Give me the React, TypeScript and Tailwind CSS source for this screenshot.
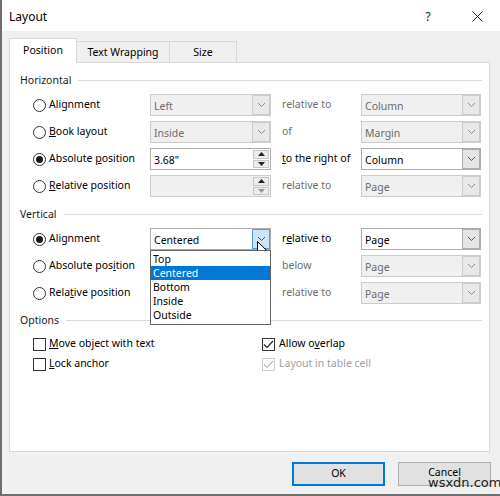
import type { ReactNode } from "react";

function Radio({ checked }: { checked?: boolean }) {
  return (
    <span className="flex size-[13px] shrink-0 items-center justify-center rounded-full border border-[#333333] bg-white">
      {checked && <span className="size-[7px] rounded-full bg-[#1a1a1a]" />}
    </span>
  );
}

function Check({ checked, disabled }: { checked?: boolean; disabled?: boolean }) {
  return (
    <span
      className={
        disabled
          ? "flex size-[13px] shrink-0 items-center justify-center border border-[#cccccc] bg-white"
          : "flex size-[13px] shrink-0 items-center justify-center border border-[#333333] bg-white"
      }
    >
      {checked && (
        <svg width="11" height="9" viewBox="0 0 11 9">
          <path d="M1 4.5 L4 7.5 L10 1" fill="none" stroke={disabled ? "#bcbcbc" : "#222"} strokeWidth="1.2" />
        </svg>
      )}
    </span>
  );
}

function Chevron({ color = "#606060" }: { color?: string }) {
  return (
    <svg width="9" height="6" viewBox="0 0 9 6">
      <path d="M1 1 L4.5 4.5 L8 1" fill="none" stroke={color} strokeWidth="1" />
    </svg>
  );
}

function Combo({
  value,
  disabled,
  hot,
  wide,
  children,
}: {
  value: string;
  disabled?: boolean;
  hot?: boolean;
  wide?: boolean;
  children?: ReactNode;
}) {
  const box = disabled
    ? "border-[#cccccc] bg-[#f0f0f0] text-[#6d6d6d]"
    : "border-[#adadad] bg-white text-black";
  const btn = hot
    ? "border-[#569de5] bg-[#cce4f7]"
    : disabled
      ? "border-[#cccccc] bg-[#e8e8e8]"
      : "border-[#adadad] bg-[#e5e5e5]";
  return (
    <div className={`relative flex h-[22px] shrink-0 border ${wide ? "w-[121px]" : "w-[120px]"} ${box}`}>
      <span className="flex-1 pl-[3px] pt-px leading-[20px]">{value}</span>
      <span className={`flex w-[18px] items-center justify-center border ${btn}`}>
        <Chevron color={disabled ? "#8a8a8a" : "#555555"} />
      </span>
      {children}
    </div>
  );
}

function Spinner({ value, disabled }: { value: string; disabled?: boolean }) {
  const box = disabled ? "border-[#cccccc] bg-[#f0f0f0]" : "border-[#adadad] bg-white";
  const tri = disabled ? "#9a9a9a" : "#222222";
  return (
    <div className={`flex h-[22px] w-[121px] shrink-0 border ${box}`}>
      <span className="flex-1 pl-[3px] pt-px leading-[20px] text-black">{value}</span>
      <span className="flex w-[17px] flex-col gap-px py-px pr-px">
        <span className="flex flex-1 items-center justify-center border border-[#c8c8c8] bg-[#ececec]">
          <svg width="7" height="4" viewBox="0 0 7 4">
            <path d="M0 4 L3.5 0 L7 4 Z" fill="#222222" />
          </svg>
        </span>
        <span className="flex flex-1 items-center justify-center border border-[#c8c8c8] bg-[#ececec]">
          <svg width="7" height="4" viewBox="0 0 7 4">
            <path d="M0 0 L3.5 4 L7 0 Z" fill={tri} />
          </svg>
        </span>
      </span>
    </div>
  );
}

function Header({ children }: { children: ReactNode }) {
  return (
    <div className="flex h-[14px] items-center pl-[10px] pr-[7px]">
      <span className="leading-[14px] text-[#1a1a1a]">{children}</span>
      <span className="ml-[7px] h-px flex-1 bg-[#dcdcdc]" />
    </div>
  );
}

function Row({
  checked,
  label,
  mid,
  rel,
  relDisabled,
  right,
}: {
  checked?: boolean;
  label: ReactNode;
  mid: ReactNode;
  rel: ReactNode;
  relDisabled?: boolean;
  right: ReactNode;
}) {
  return (
    <div className="flex h-[22px] items-center pl-[23px]">
      <div className="flex w-[117px] shrink-0 items-center gap-[3px]">
        <Radio checked={checked} />
        <span className="text-black">{label}</span>
      </div>
      {mid}
      <span className={`ml-[11px] w-[79px] shrink-0 ${relDisabled ? "text-[#6d6d6d]" : "text-black"}`}>{rel}</span>
      {right}
    </div>
  );
}

function Cursor() {
  return (
    <svg className="absolute left-[255px] top-[241px]" width="13" height="19" viewBox="0 0 13 19">
      <path d="M0.5 0.5 L0.5 15 L4 11.5 L6.5 17.5 L9 16.5 L6.5 10.8 L11 10.8 Z" fill="#ffffff" stroke="#000000" strokeWidth="1" />
    </svg>
  );
}

export default function App() {
  const items = ["Top", "Centered", "Bottom", "Inside", "Outside"];
  return (
    <div className="relative flex h-[496px] w-[500px] flex-col overflow-hidden border-b-2 border-l-2 border-[#6e6e6e] bg-[#f0f0f0] font-['Segoe_UI','Noto_Sans',sans-serif] text-[10.5px] text-black">
      {/* title bar */}
      <div className="flex h-[31px] shrink-0 items-center bg-white pl-[7px] pt-[2px]">
        <span className="text-[12px]">Layout</span>
        <span className="ml-auto w-[12px] text-center text-[12px] text-[#222]">?</span>
        <span className="ml-[37px] mr-[17px] flex w-[12px] justify-center">
          <svg width="11" height="11" viewBox="0 0 11 11">
            <path d="M0.5 0.5 L10.5 10.5 M10.5 0.5 L0.5 10.5" stroke="#222" strokeWidth="1" />
          </svg>
        </span>
      </div>

      {/* tabs */}
      <div className="mt-[7px] flex pl-[7px]">
        <div className="relative z-10 -mb-px flex h-[25px] w-[68px] items-center justify-center border border-b-0 border-[#d9d9d9] bg-white">
          Position
        </div>
        <div className="mt-[3px] flex h-[21px] w-[93px] items-center justify-center border border-b-0 border-l-0 border-[#d9d9d9] pt-px">
          Text Wrapping
        </div>
        <div className="mt-[3px] flex h-[21px] w-[67px] items-center justify-center border border-b-0 border-l-0 border-[#d9d9d9] pt-px">
          Size
        </div>
      </div>

      {/* panel */}
      <div className="ml-[7px] flex h-[390px] w-[481px] flex-col border border-[#d9d9d9] bg-white pt-[10px]">
        <Header>Horizontal</Header>
        <div className="mt-[7px] flex flex-col gap-[5px]">
          <Row
            label="Alignment"
            mid={<Combo value="Left" disabled wide />}
            rel="relative to"
            relDisabled
            right={<Combo value="Column" disabled />}
          />
          <Row
            label={
              <>
                <span className="underline">B</span>ook layout
              </>
            }
            mid={<Combo value="Inside" disabled wide />}
            rel="of"
            relDisabled
            right={<Combo value="Margin" disabled />}
          />
          <Row
            checked
            label={
              <>
                Absolute <span className="underline">p</span>osition
              </>
            }
            mid={<Spinner value={'3.68"'} />}
            rel={
              <>
                <span className="underline">t</span>o the right of
              </>
            }
            right={<Combo value="Column" />}
          />
          <Row
            label={
              <>
                <span className="underline">R</span>elative position
              </>
            }
            mid={<Spinner value="" disabled />}
            rel="relative to"
            relDisabled
            right={<Combo value="Page" disabled />}
          />
        </div>

        <div className="mt-[10px]">
          <Header>Vertical</Header>
        </div>
        <div className="mt-[7px] flex flex-col gap-[5px]">
          <Row
            checked
            label="Alignment"
            mid={
              <Combo value="Centered" wide hot>
                <div className="absolute left-[-1px] top-[21px] z-20 flex h-[75px] w-[121px] flex-col border border-[#646464] bg-white py-px">
                  {items.map((it) => (
                    <div
                      key={it}
                      className={
                        it === "Centered"
                          ? "h-[14px] bg-[#0078d7] pl-[2px] leading-[14px] text-white"
                          : "h-[14px] pl-[2px] leading-[14px] text-black"
                      }
                    >
                      {it}
                    </div>
                  ))}
                </div>
              </Combo>
            }
            rel={
              <>
                r<span className="underline">e</span>lative to
              </>
            }
            right={<Combo value="Page" />}
          />
          <Row
            label={
              <>
                Absolute pos<span className="underline">i</span>tion
              </>
            }
            mid={<Combo value="" disabled wide />}
            rel="below"
            relDisabled
            right={<Combo value="Page" disabled />}
          />
          <Row
            label={
              <>
                Rela<span className="underline">t</span>ive position
              </>
            }
            mid={<Combo value="" disabled wide />}
            rel="relative to"
            relDisabled
            right={<Combo value="Page" disabled />}
          />
        </div>

        <div className="mt-[9px]">
          <Header>Options</Header>
        </div>
        <div className="mt-[7px] flex pl-[23px]">
          <div className="flex w-[229px] flex-col">
            <div className="flex h-[20px] items-center gap-[3px]">
              <Check />
              <span>
                <span className="underline">M</span>ove object with text
              </span>
            </div>
            <div className="flex h-[20px] items-center gap-[3px]">
              <Check />
              <span>
                <span className="underline">L</span>ock anchor
              </span>
            </div>
          </div>
          <div className="flex flex-col">
            <div className="flex h-[20px] items-center gap-[4px]">
              <Check checked />
              <span>
                Allow o<span className="underline">v</span>erlap
              </span>
            </div>
            <div className="flex h-[20px] items-center gap-[4px] text-[#a0a0a0]">
              <Check checked disabled />
              <span>Layout in table cell</span>
            </div>
          </div>
        </div>
      </div>

      {/* buttons */}
      <div className="mt-[10px] flex justify-end gap-[13px] pr-[9px]">
        <button type="button" className="h-[24px] w-[93px] border border-[#0078d7] bg-[#e1e1e1] text-[10.5px] outline outline-1 -outline-offset-2 outline-[#0078d7]">
          OK
        </button>
        <button type="button" className="h-[24px] w-[93px] border border-[#adadad] bg-[#e1e1e1] pb-[2px] text-[10.5px]">
          Cancel
        </button>
      </div>

      <span className="absolute left-[426px] top-[475px] font-['DejaVu_Sans',sans-serif] text-[13px] leading-[16px] text-[#222]">
        wsxdn.com
      </span>
      <Cursor />
    </div>
  );
}
